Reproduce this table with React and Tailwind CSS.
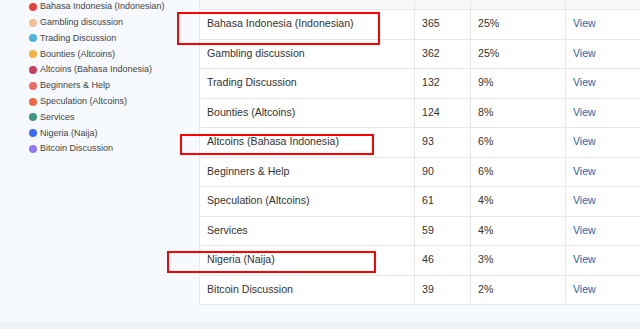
import React from "react";

const legend = [
  { name: "Bahasa Indonesia (Indonesian)", color: "bg-[#e8423b]" },
  { name: "Gambling discussion", color: "bg-[#f4bd98]" },
  { name: "Trading Discussion", color: "bg-[#4cb5dc]" },
  { name: "Bounties (Altcoins)", color: "bg-[#f5b043]" },
  { name: "Altcoins (Bahasa Indonesia)", color: "bg-[#c83f60]" },
  { name: "Beginners & Help", color: "bg-[#ea6c68]" },
  { name: "Speculation (Altcoins)", color: "bg-[#ec6842]" },
  { name: "Services", color: "bg-[#3f9584]" },
  { name: "Nigeria (Naija)", color: "bg-[#3b6cf5]" },
  { name: "Bitcoin Discussion", color: "bg-[#927af2]" },
];

const rows = [
  ["Bahasa Indonesia (Indonesian)", 365, "25%"],
  ["Gambling discussion", 362, "25%"],
  ["Trading Discussion", 132, "9%"],
  ["Bounties (Altcoins)", 124, "8%"],
  ["Altcoins (Bahasa Indonesia)", 93, "6%"],
  ["Beginners & Help", 90, "6%"],
  ["Speculation (Altcoins)", 61, "4%"],
  ["Services", 59, "4%"],
  ["Nigeria (Naija)", 46, "3%"],
  ["Bitcoin Discussion", 39, "2%"],
];

function Row({ cells, header }) {
  const base =
    "flex items-center px-[7px] border-r border-[#e8e8e8] whitespace-nowrap";
  return (
    <div
      className={`grid grid-cols-[215px_56px_95px_1fr] border-b border-[#e8e8e8] ${
        header ? "h-[32px] bg-[#f8f8f8]" : "h-[29.5px] bg-white"
      }`}
    >
      <div className={base}>{cells[0]}</div>
      <div className={base}>{cells[1]}</div>
      <div className={base}>{cells[2]}</div>
      <div className={`${base} border-r-0 text-[#2a65ac]`}>{cells[3]}</div>
    </div>
  );
}

function App() {
  return (
    <div
      className="relative w-[640px] h-[329px] overflow-hidden bg-[#f6f9fd] text-[#333]"
      style={{ fontFamily: '"Liberation Sans", Arial, sans-serif' }}
    >
      <div className="flex h-[322px]">
        <div className="w-[199px] shrink-0 pl-[29px] -mt-[1px]">
          {legend.map((l) => (
            <div
              key={l.name}
              className="flex items-center h-[15.8px] text-[9px] text-[#444] whitespace-nowrap"
            >
              <span
                className={`w-[8px] h-[8px] shrink-0 rounded-full mr-[3px] ${l.color}`}
              />
              {l.name}
            </div>
          ))}
        </div>
        <div className="w-[520px] shrink-0 -mt-[22px] self-start border-l border-[#e8e8e8] text-[10.6px]">
          <Row header cells={["Board", "Posts", "Percentage", ""]} />
          {rows.map((r) => (
            <Row key={r[0]} cells={[r[0], r[1], r[2], "View"]} />
          ))}
        </div>
      </div>
      <div className="h-[7px] bg-[#f0f3f8] border-t border-[#edf0f5]" />

      <div className="absolute left-[177px] top-[12px] w-[203px] h-[33px] border-2 border-[#ff0000]" />
      <div className="absolute left-[180px] top-[134px] w-[194px] h-[21px] border-2 border-[#ff0000]" />
      <div className="absolute left-[167px] top-[251px] w-[209px] h-[22px] border-2 border-[#ff0000]" />
    </div>
  );
}

export default App;
